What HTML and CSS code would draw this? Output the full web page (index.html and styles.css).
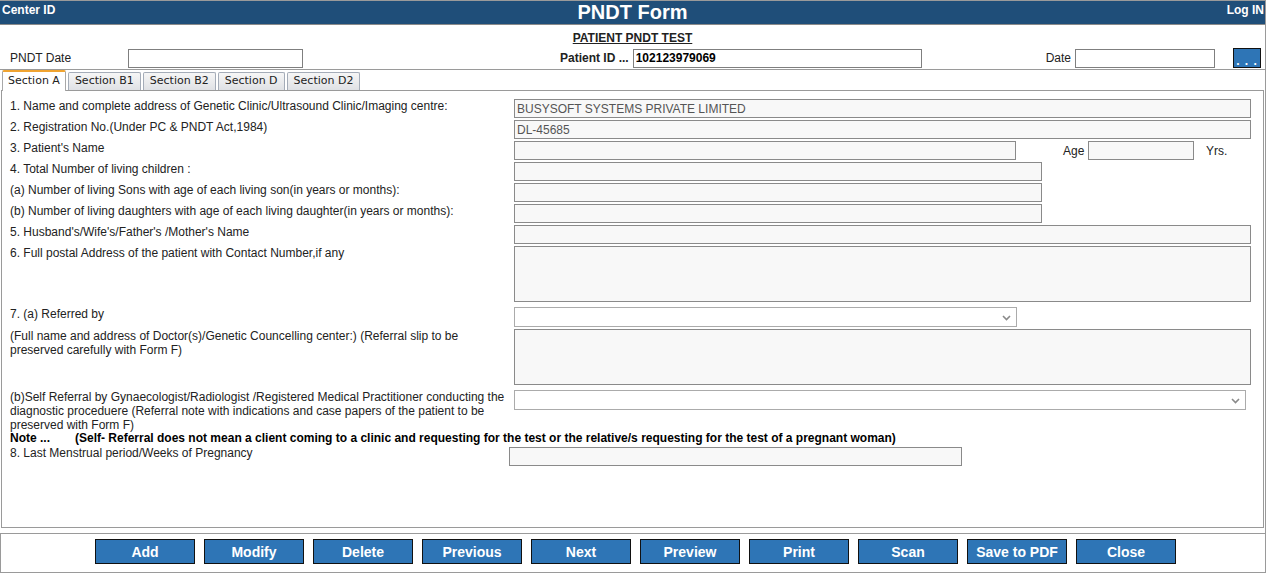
FILE: index.html
```html
<!DOCTYPE html>
<html lang="en">
<head>
<meta charset="UTF-8">
<title>PNDT Form</title>
<link rel="stylesheet" href="styles.css">
</head>
<body>

<div class="page">
    <div class="topbar">
        <div class="center-id">Center ID</div>
        <div class="form-title">PNDT Form</div>
        <div class="login">Log IN</div>
    </div>

    <div class="subtitle">PATIENT PNDT TEST</div>

    <div class="idrow">
        <label class="lbl-date">PNDT Date</label>
        <input class="box pndt-date" type="text">
        <label class="lbl-pid">Patient ID ...</label>
        <input class="box pid" type="text" value="102123979069">
        <label class="lbl-d">Date</label>
        <input class="box date" type="text">
        <button class="dots">. . .</button>
    </div>

    <div class="tabs">
        <div class="tab active">Section A</div>
        <div class="tab">Section B1</div>
        <div class="tab">Section B2</div>
        <div class="tab">Section D</div>
        <div class="tab">Section D2</div>
    </div>

    <div class="panel">
        <div class="form">
            <div class="lbl">1. Name and complete address of Genetic Clinic/Ultrasound Clinic/Imaging centre:</div>
            <input class="field" type="text" value="BUSYSOFT SYSTEMS PRIVATE LIMITED">

            <div class="lbl">2. Registration No.(Under PC &amp; PNDT Act,1984)</div>
            <input class="field" type="text" value="DL-45685">

            <div class="lbl">3. Patient's Name</div>
            <div class="age-row">
                <input class="field w-name" type="text">
                <span class="age-lbl">Age</span>
                <input class="field w-age" type="text">
                <span class="yrs">Yrs.</span>
            </div>

            <div class="lbl">4. Total Number of living children :</div>
            <input class="field w-mid" type="text">

            <div class="lbl">(a) Number of living Sons with age of each living son(in years or months):</div>
            <input class="field w-mid" type="text">

            <div class="lbl">(b) Number of living daughters with age of each living daughter(in years or months):</div>
            <input class="field w-mid" type="text">

            <div class="lbl">5. Husband's/Wife's/Father's /Mother's Name</div>
            <input class="field" type="text">

            <div class="lbl">6. Full postal Address of the patient with Contact Number,if any</div>
            <textarea class="field area"></textarea>

            <div class="lbl gap-top">7. (a) Referred by</div>
            <div class="select w-ref gap-top">
                <select></select>
                <svg width="9" height="6" viewBox="0 0 9 6"><polyline points="1,1 4.5,4.5 8,1" fill="none" stroke="#8a8a8a" stroke-width="1.6"/></svg>
            </div>

            <div class="lbl">(Full name and address of Doctor(s)/Genetic Councelling center:) (Referral slip to be preserved carefully with Form F)</div>
            <textarea class="field area"></textarea>

            <div class="lbl gap-top">(b)Self Referral by Gynaecologist/Radiologist /Registered Medical Practitioner conducting the diagnostic proceduere (Referral note with indications and case papers of the patient to be preserved with Form F)</div>
            <div class="select w-self gap-top">
                <select></select>
                <svg width="9" height="6" viewBox="0 0 9 6"><polyline points="1,1 4.5,4.5 8,1" fill="none" stroke="#8a8a8a" stroke-width="1.6"/></svg>
            </div>

            <div class="note"><span class="note-head">Note ...</span>(Self- Referral does not mean a client coming to a clinic and requesting for the test or the relative/s requesting for the test of a pregnant woman)</div>

            <div class="lbl lmp-lbl">8. Last Menstrual period/Weeks of Pregnancy</div>
            <input class="field w-lmp" type="text">
        </div>
    </div>

    <div class="actions">
        <button>Add</button>
        <button>Modify</button>
        <button>Delete</button>
        <button>Previous</button>
        <button>Next</button>
        <button>Preview</button>
        <button>Print</button>
        <button>Scan</button>
        <button>Save to PDF</button>
        <button>Close</button>
    </div>
</div>

</body>
</html>
```

FILE: styles.css
```css
    * {
        box-sizing: border-box;
    }

    body {
        margin: 0;
        font-family: "Liberation Sans", Arial, sans-serif;
        font-size: 12px;
        color: #222;
        background: #fff;
    }

    .page {
        width: 1266px;
        border-top: 1px solid #9a9a9a;
        border-right: 1px solid #9a9a9a;
    }

    /* header bar */
    .topbar {
        display: grid;
        grid-template-columns: 1fr auto 1fr;
        height: 24px;
        background: #1f4e79;
        border-bottom: 1px solid #8a8a8a;
        color: #fff;
        font-weight: bold;
    }

    .center-id {
        padding: 2px 0 0 2px;
        line-height: 14px;
    }

    .form-title {
        font-size: 20px;
        line-height: 23px;
    }

    .login {
        text-align: right;
        padding: 2px 1px 0 0;
        line-height: 14px;
    }

    .subtitle {
        text-align: center;
        font-weight: bold;
        text-decoration: underline;
        line-height: 14px;
        padding-top: 6px;
    }

    /* id row */
    .idrow {
        display: flex;
        align-items: center;
        height: 24px;
        padding: 3px 0 1px 10px;
    }

    .box {
        height: 19px;
        border: 1px solid #7f7f7f;
        background: #fff;
        font-family: inherit;
        font-size: 12px;
        padding: 0 2px;
    }

    .lbl-date { width: 118px; }
    .pndt-date { width: 175px; }
    .lbl-pid { margin-left: 257px; font-weight: bold; }
    .pid { width: 289px; margin-left: 4px; font-weight: bold; color: #000; }
    .lbl-d { margin-left: 124px; }
    .date { width: 140px; margin-left: 4px; }

    .dots {
        width: 28px;
        height: 20px;
        margin-left: 18px;
        background: #2e75b6;
        border: 1px solid #111;
        color: #fff;
        font-weight: bold;
        font-size: 12px;
        letter-spacing: 1px;
        padding: 5px 0 0;
        line-height: 12px;
    }

    /* tabs */
    .tabs {
        display: flex;
        align-items: flex-end;
        gap: 2px;
        height: 21px;
        padding-left: 2px;
        border-top: 1px solid #9a9a9a;
        font-family: "DejaVu Sans", Verdana, sans-serif;
        font-size: 11px;
    }

    .tab {
        height: 18px;
        line-height: 16px;
        padding: 0 6px;
        border: 1px solid #a4acb8;
        border-bottom: none;
        border-radius: 2px 2px 0 0;
        background: linear-gradient(#f6f6f6, #dfe1e5);
        color: #222;
    }

    .tab.active {
        position: relative;
        z-index: 1;
        height: 21px;
        margin-bottom: -1px;
        line-height: 17px;
        padding: 0 5px;
        background: #fff;
        border-color: #a8a8a8;
        border-top: 2px solid #f0a431;
    }

    /* section panel */
    .panel {
        height: 438px;
        margin: 0 1px;
        border: 1px solid #9a9a9a;
        padding: 8px 12px 0 8px;
    }

    .form {
        display: grid;
        grid-template-columns: 500px 1fr;
        column-gap: 4px;
        row-gap: 2px;
        align-items: start;
    }

    .lbl {
        line-height: 14px;
        color: #222;
    }

    .lmp-lbl {
        margin-top: -1px;
    }

    .field {
        display: block;
        width: 100%;
        height: 19px;
        border: 1px solid #8a8a8a;
        background: #f8f8f8;
        font-family: inherit;
        font-size: 12px;
        color: #555;
        padding: 0 2px;
    }

    .area {
        height: 56px;
        resize: none;
    }

    .gap-top { margin-top: 3px; }

    .age-row {
        display: flex;
        align-items: center;
    }

    .w-name { width: 502px; }
    .age-lbl { margin-left: 47px; width: 25px; }
    .w-age { width: 106px; }
    .yrs { margin-left: 12px; }
    .w-mid { width: 528px; }

    .w-lmp {
        width: 453px;
        margin-left: -5px;
    }

    .select {
        position: relative;
        height: 20px;
    }

    .select select {
        width: 100%;
        height: 20px;
        border: 1px solid #ababab;
        background: #fff;
        appearance: none;
        -webkit-appearance: none;
    }

    .select svg {
        position: absolute;
        right: 6px;
        top: 8px;
    }

    .w-ref { width: 503px; }
    .w-self { width: 732px; }

    .note {
        grid-column: 1 / -1;
        font-weight: bold;
        line-height: 13px;
        margin-top: -2px;
        color: #000;
    }

    .note-head {
        display: inline-block;
        width: 65px;
    }

    /* bottom buttons */
    .actions {
        display: flex;
        gap: 9px;
        height: 40px;
        margin-top: 5px;
        padding: 5px 0 0 94px;
        border: 1px solid #9a9a9a;
        border-right: none;
    }

    .actions button {
        width: 100px;
        height: 25px;
        background: #2e75b6;
        border: 1px solid #111;
        color: #fff;
        font-family: "Liberation Sans", Arial, sans-serif;
        font-weight: bold;
        font-size: 14px;
        padding: 0;
        cursor: pointer;
    }
```
